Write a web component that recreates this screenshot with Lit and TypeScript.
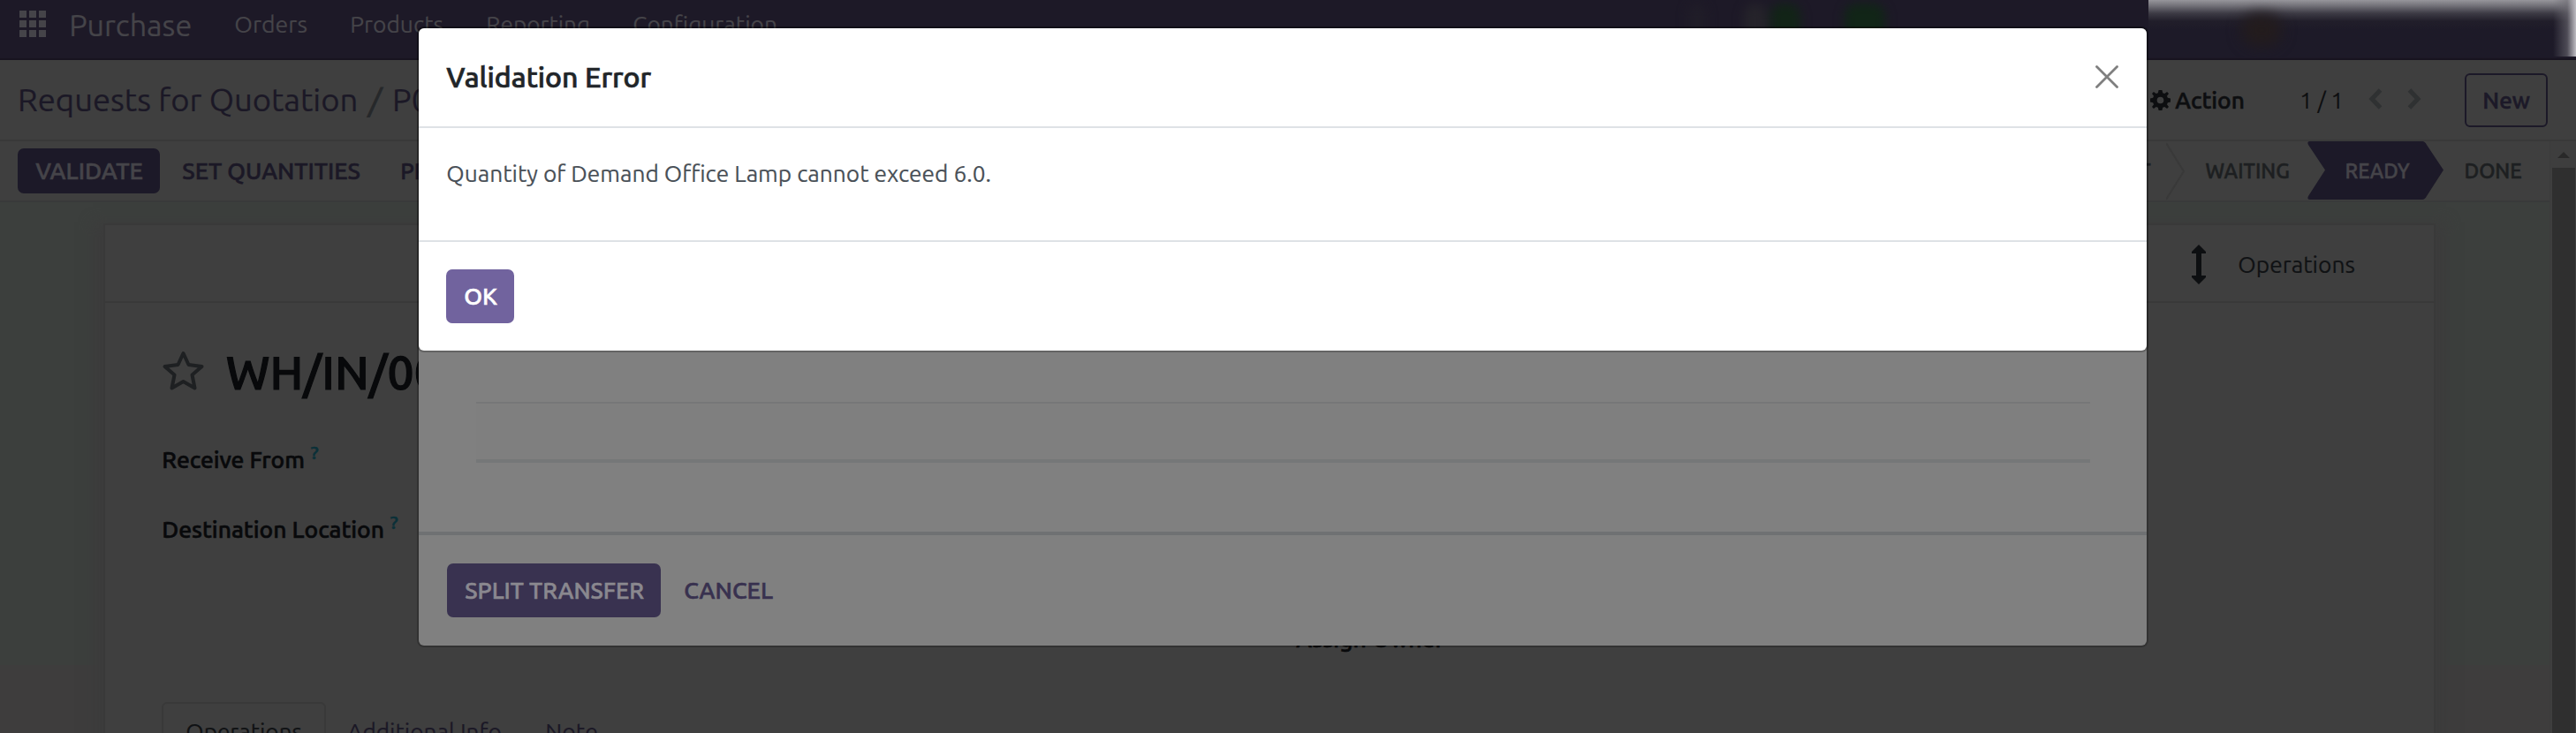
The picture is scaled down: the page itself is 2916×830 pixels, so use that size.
import { LitElement, html, svg, css } from "lit";
import { customElement, property } from "lit/decorators.js";

// A line of text set to an exact measure; capitals are centred on the box.
@customElement("ui-label")
class UiLabel extends LitElement {
  @property() text = "";
  @property({ type: Number }) w = 100;
  @property({ type: Number }) size = 26;
  static styles = css`
    :host { display: block; flex: none; color: inherit; }
    svg { display: block; overflow: visible; }
    text { fill: currentColor; stroke: currentColor; stroke-width: var(--heft, 0.006em); font-family: Ubuntu, "Noto Sans", "Open Sans", sans-serif; }
  `;
  render() {
    return html`<svg width=${this.w} height=${this.size}>
      ${svg`<text x=${-this.size * 0.025} y=${this.size * 0.8465 + 1} font-size=${this.size} textLength=${this.w + this.size * 0.06} lengthAdjust="spacingAndGlyphs">${this.text}</text>`}
    </svg>`;
  }
}

const label = (text: string, w: number, size = 26.4, cls = "") =>
  html`<ui-label class=${cls} .text=${text} .w=${w} .size=${size}></ui-label>`;

@customElement("app-root")
class AppRoot extends LitElement {
  static styles = css`
    :host { display: block; position: relative; width: 2916px; height: 830px; overflow: hidden; background: #3f3f3f; font-family: Ubuntu, "Noto Sans", sans-serif; }
    * { box-sizing: border-box; }
    svg { display: block; flex: none; }
    .medium { font-weight: 500; --heft: 0.022em; }
    .page { display: flex; flex-direction: column; height: 830px; }

    .nav { height: 68px; flex: none; display: flex; align-items: center; padding: 0 0 11px 22px; background: #1d1927; border-bottom: 2px solid #17131f; color: #454449; position: relative; }
    .apps { display: grid; grid-template-columns: repeat(3, 8px); grid-auto-rows: 8px; gap: 3px; margin: 0 27px 2px 0; }
    .apps i { background: #454449; }
    .brand { margin-right: 50px; }
    .menu { display: flex; gap: 50px; }
    .smudge { position: absolute; left: 1888px; top: 2px; width: 544px; height: 62px; filter: blur(6px); }
    .smudge i { position: absolute; top: 2px; height: 62px; border-radius: 14px; }
    .g1 { left: 116px; width: 34px; background: #122417; }
    .g2 { left: 200px; width: 46px; background: #112517; }
    .g3 { left: 86px; width: 26px; background: #25232a; }
    .g4 { left: 22px; width: 22px; background: #201d28; }
    .haze { position: absolute; left: 2432px; top: 0; width: 484px; height: 64px; overflow: hidden; background:
      linear-gradient(to left, rgba(190,188,194,1), rgba(110,108,116,.6) 10px, rgba(29,25,39,0) 26px),
      linear-gradient(#96959b, #75747b 6px, #3d3b45 15px, #211e2a 24px, rgba(29,25,39,0) 34px), #1d1a28; }
    .amber { position: absolute; left: 105px; top: 16px; width: 46px; height: 36px; border-radius: 23px; background: #231c1d; filter: blur(8px); }

    .control { height: 92px; flex: none; display: flex; align-items: center; padding: 0 32px 0 21px; border-bottom: 2px solid #393939; color: #1b1826; }
    .slash { color: #26282a; margin: 0 13px; }
    .right { margin-left: auto; display: flex; align-items: center; color: #0d0e10; }
    .action { margin: 0 64px 0 6px; }
    .pager { display: flex; gap: 28px; margin: -3px 49px 0 29px; }
    .new { width: 94px; height: 61px; border: 2px solid #1c1928; border-radius: 6px; display: flex; align-items: center; justify-content: center; color: #1c1928; }

    .content { flex: 1; display: flex; min-height: 0; }
    .scroller { flex: 1; min-width: 0; display: flex; flex-direction: column; }
    .status { height: 69px; flex: none; display: flex; align-items: center; border-bottom: 2px solid #393a3a; padding: 0 32px 0 20px; color: #1b1826; }
    .btn { display: flex; align-items: center; justify-content: center; border-radius: 7px; }
    .validate { width: 161px; height: 51px; background: #1c1928; color: #454449; margin-right: 26px; }
    .setq { margin-right: 47px; }
    .steps { margin-left: auto; display: flex; align-items: center; color: #1d1f21; }
    .steps > ui-label { margin-top: -2px; }
    .step-gap { margin: 0 24px 0 18px; }
    .ready { width: 155px; height: 67px; margin: 0 24px 0 20px; display: grid; align-items: center; color: #454449; }
    .ready > * { grid-area: 1 / 1; }
    .ready ui-label { margin-left: 44px; margin-top: -2px; }

    .bar { width: 30px; flex: none; background: #3e3e3e; display: flex; flex-direction: column; align-items: center; border-left: 1px solid #3c3c3c; }
    .bar svg { margin: 12px 0 11px; }
    .thumb { width: 26px; flex: 1; background: #2f2f2f; }

    .canvas { flex: 1; min-height: 0; padding: 24px 129px 0 117px; background: linear-gradient(#3c3f3d 0 524px, #3e3d3d 524px); }
    .sheet { height: 640px; background: #3f3f3f; border: 2px solid #393939; box-shadow: 0 10px 14px 12px #3c3c3c; }
    .stats { height: 88px; border-bottom: 2px solid #393939; display: flex; align-items: center; justify-content: flex-end; padding: 3px 90px 0 0; color: #101214; }
    .stats svg { margin-right: 37px; }
    .form { padding: 53px 0 0 64px; }
    .title { display: flex; align-items: center; gap: 25px; height: 50px; color: #08090b; }
    .title > svg { margin-bottom: 4px; }
    .title > ui-label { margin-top: 2px; }
    .field { display: flex; height: 26px; margin-left: 1px; color: #08090b; }
    .f1 { margin-top: 61px; }
    .f2 { margin-top: 53px; }
    .help { color: #0b3038; margin: -5px 0 0 8px; }
    .owner { margin: 98px 0 0 1285px; height: 26px; color: #08090b; }
    .tabs { display: flex; margin-top: 59px; color: #1b1826; }
    .tab { width: 186px; height: 60px; border: 2px solid #393939; border-radius: 6px 6px 0 0; display: flex; justify-content: center; padding-top: 18px; color: #101214; }
    .tabs > ui-label { margin: 20px 0 0 25px; }
    .tabs > .note { margin-left: 51px; }

    .modal { position: absolute; left: 474px; width: 1956px; display: flex; flex-direction: column; }
    .back { top: 32px; height: 699px; background: #808080; border-radius: 6px; box-shadow: 0 0 0 2px rgba(0,0,0,.2); padding-top: 423px; }
    .line { margin: 0 64px 0 65px; height: 69px; background: #7f7f7f; border-top: 2px solid #767778; border-bottom: 4px solid #757778; }
    .backfoot { margin-top: 78px; border-top: 4px solid #6f7173; height: 129px; display: flex; align-items: center; padding: 0 0 0 32px; color: #38314f; }
    .split { width: 242px; height: 61px; background: #393250; color: #8a888f; margin-right: 27px; }
    .front { top: 32px; height: 365px; background: #fff; border-radius: 6px; box-shadow: 0 0 0 2px rgba(0,0,0,.22); }
    .head { height: 113px; flex: none; display: flex; align-items: center; justify-content: space-between; padding: 0 32px 2px; border-bottom: 2px solid #dee2e6; color: #212529; }
    .body { height: 129px; flex: none; padding: 38px 32px 0; border-bottom: 2px solid #dee2e6; color: #495057; }
    .foot { flex: 1; padding: 31px 31px 0; }
    .ok { width: 77px; height: 61px; background: #71639e; color: #fff; }
  `;

  render() {
    return html`
      <div class="page">
        <div class="nav">
          <div class="apps">${Array.from({ length: 9 }, () => html`<i></i>`)}</div>
          ${label("Purchase", 137, 34, "brand")}
          <div class="menu">
            ${label("Orders", 81)}${label("Products", 104)}${label("Reporting", 116)}${label("Configuration", 162)}
          </div>
          <div class="smudge"><i class="g4"></i><i class="g3"></i><i class="g1"></i><i class="g2"></i></div>
          <div class="haze"><div class="amber"></div></div>
        </div>
        <div class="control">
          ${label("Requests for Quotation", 383, 36)}${label("/", 15, 36, "slash")}${label("P00", 60, 36)}
          <div class="right">
            <svg width="23" height="23" viewBox="-12 -12 24 24">
              <path fill="#0d0e10" fill-rule="evenodd" d="M-2-12H2L2.8-8.7 5-7.8 7.9-9.9 9.9-7.9 7.8-5 8.7-2.8 12-2V2L8.7 2.8 7.8 5 9.9 7.9 7.9 9.9 5 7.8 2.8 8.7 2 12H-2L-2.8 8.7-5 7.8-7.9 9.9-9.9 7.9-7.8 5-8.7 2.8-12 2V-2L-8.7-2.8-7.8-5-9.9-7.9-7.9-9.9-5-7.8-2.8-8.7ZM0-4A4 4 0 1 0 0 4 4 4 0 1 0 0-4Z" />
            </svg>
            ${label("Action", 77, 26.4, "action medium")}
            ${label("1 / 1", 48)}
            <div class="pager">
              <svg width="16" height="24" fill="none" stroke="#2f3132" stroke-width="5"><path d="M13.500 2 4 12 13.500 22" /></svg>
              <svg width="16" height="24" fill="none" stroke="#2f3132" stroke-width="5"><path d="M2.500 2 12 12 2.500 22" /></svg>
            </div>
            <div class="new">${label("New", 52, 26.4, "medium")}</div>
          </div>
        </div>
        <div class="content">
          <div class="scroller">
            <div class="status">
              <div class="btn validate">${label("VALIDATE", 120, 26.4, "medium")}</div>
              ${label("SET QUANTITIES", 200, 26.4, "setq medium")}${label("PRINT", 70, 26.4, "medium")}
              <div class="steps">
                ${label("DRAFT", 76, 23.4, "medium")}
                <svg class="step-gap" width="21" height="66" fill="none" stroke="#393939" stroke-width="2"><path d="M0 1 20 33 0 65" /></svg>
                ${label("WAITING", 94, 23.4, "medium")}
                <div class="ready">
                  <svg width="155" height="67"><path fill="#1c1928" d="M4 0H131Q134 0 136 4L155 32.500 136 62Q134 66 131 66H4Q0 66 2 62L21 32.500 2 4Q0 0 4 0Z" /></svg>
                  ${label("READY", 72, 23.4, "medium")}
                </div>
                ${label("DONE", 64, 23.4, "medium")}
              </div>
            </div>
            <div class="canvas">
              <div class="sheet">
                <div class="stats">
                  <svg width="16" height="45" fill="#0d0f11"><path d="M8 0 16 8V10H11V35H16V37L8 45 0 37V35H5V10H0V8Z" /></svg>
                  ${label("Operations", 131)}
                </div>
                <div class="form">
                  <div class="title">
                    <svg width="49" height="47" viewBox="0 0 49 47" fill="none" stroke="#1e2022" stroke-width="4" stroke-linejoin="round"><path d="M24.500 4 30.500 17 45.500 19 34.500 28.500 37.500 43.500 24.500 36 11.500 43.500 14.500 28.500 3.500 19 18.500 17Z" /></svg>
                    ${label("WH/IN/00", 240, 52, "medium")}
                  </div>
                  <div class="field f1">${label("Receive From", 160, 26.4, "medium")}${label("?", 8, 20, "help medium")}</div>
                  <div class="field f2">${label("Destination Location", 250, 26.4, "medium")}${label("?", 8, 20, "help medium")}</div>
                  <div class="owner">${label("Assign Owner", 166, 26.4, "medium")}</div>
                  <div class="tabs">
                    <div class="tab">${label("Operations", 130)}</div>
                    ${label("Additional Info", 173)}${label("Note", 58, 26.4, "note")}
                  </div>
                </div>
              </div>
            </div>
          </div>
          <div class="bar">
            <svg width="14" height="7" fill="#292929"><path d="M7 0 14 7H0Z" /></svg>
            <div class="thumb"></div>
          </div>
        </div>
      </div>

      <div class="modal back">
        <div class="line"></div>
        <div class="backfoot">
          <div class="btn split">${label("SPLIT TRANSFER", 201, 26.4, "medium")}</div>
          ${label("CANCEL", 99, 26.4, "medium")}
        </div>
      </div>
      <div class="modal front">
        <div class="head">
          ${label("Validation Error", 230, 32, "medium")}
          <svg width="26" height="26" fill="none" stroke="#7f7f7f" stroke-width="2.800" stroke-linecap="round"><path d="M1.500 1.500 24.500 24.500M24.500 1.500 1.500 24.500" /></svg>
        </div>
        <div class="body">${label("Quantity of Demand Office Lamp cannot exceed 6.0.", 615)}</div>
        <div class="foot"><div class="btn ok">${label("OK", 36, 26.4, "medium")}</div></div>
      </div>
    `;
  }
}
